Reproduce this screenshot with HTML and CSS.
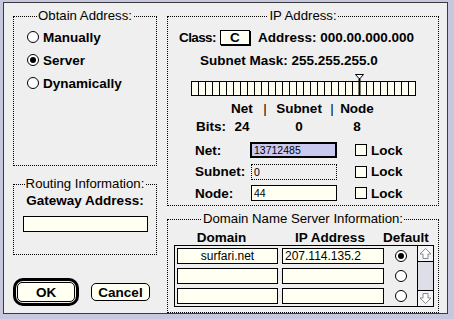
FILE: index.html
```html
<!DOCTYPE html>
<html lang="en">
<head>
    <meta charset="UTF-8">
    <title>MacTCP Configuration</title>
    <link rel="stylesheet" href="styles.css">
</head>
<body>
    <div class="dialog">
        <!-- Left column -->
        <div class="col-left">
            <fieldset class="group obtain">
                <legend>Obtain Address:</legend>
                <div class="radios">
                    <div class="radio-row"><span class="radio"></span>Manually</div>
                    <div class="radio-row"><span class="radio on"></span>Server</div>
                    <div class="radio-row"><span class="radio"></span>Dynamically</div>
                </div>
            </fieldset>

            <fieldset class="group routing">
                <legend>Routing Information:</legend>
                <div class="gw-label">Gateway Address:</div>
                <div class="gw-field"></div>
            </fieldset>

            <div class="buttons">
                <div class="default-ring"><button class="btn">OK</button></div>
                <button class="btn cancel">Cancel</button>
            </div>
        </div>

        <!-- Right column -->
        <div class="col-right">
            <fieldset class="group ip">
                <legend>IP Address:</legend>
                <div class="class-row">
                    <span class="class-label">Class:</span>
                    <span class="popup">C</span>
                    <span>Address: 000.00.000.000</span>
                </div>
                <div class="mask">Subnet Mask: 255.255.255.0</div>

                <div class="slider">
                    <span></span><span></span><span></span><span></span><span></span><span></span><span></span><span></span>
                    <span></span><span></span><span></span><span></span><span></span><span></span><span></span><span></span>
                    <span></span><span></span><span></span><span></span><span></span><span></span><span></span><span></span>
                    <span></span><span></span><span></span><span></span><span></span><span></span><span></span><span></span>
                    <svg class="thumb" width="9" height="22" viewBox="0 0 9 22">
                        <path d="M0.5 0.5 H8.5 L5 4.5 H4 Z" fill="#fff" stroke="#000" stroke-width="1"/>
                        <rect x="3.5" y="4.5" width="2" height="17.5" fill="#000"/>
                    </svg>
                </div>

                <div class="bits">
                    <span></span><span>Net</span><span class="sep">|</span><span>Subnet</span><span class="sep">|</span><span>Node</span>
                    <span class="bits-label">Bits:</span><span>24</span><span></span><span>0</span><span></span><span>8</span>
                </div>

                <div class="parts">
                    <div class="part-row">
                        <span class="part-label">Net:</span>
                        <div class="field active">13712485</div>
                        <span class="check"></span><span class="lock">Lock</span>
                    </div>
                    <div class="part-row">
                        <span class="part-label">Subnet:</span>
                        <div class="field dotted">0</div>
                        <span class="check"></span><span class="lock">Lock</span>
                    </div>
                    <div class="part-row">
                        <span class="part-label">Node:</span>
                        <div class="field">44</div>
                        <span class="check"></span><span class="lock">Lock</span>
                    </div>
                </div>
            </fieldset>

            <fieldset class="group dns">
                <legend>Domain Name Server Information:</legend>
                <div class="dns-head">
                    <span class="h-domain">Domain</span>
                    <span class="h-ip">IP Address</span>
                    <span class="h-default">Default</span>
                </div>
                <div class="dns-table">
                    <div class="dns-rows">
                        <div class="dns-row">
                            <div class="cell domain">surfari.net</div>
                            <div class="cell ip">207.114.135.2</div>
                            <div class="default"><span class="radio on"></span></div>
                        </div>
                        <div class="dns-row">
                            <div class="cell domain"></div>
                            <div class="cell ip"></div>
                            <div class="default"><span class="radio"></span></div>
                        </div>
                        <div class="dns-row">
                            <div class="cell domain"></div>
                            <div class="cell ip"></div>
                            <div class="default"><span class="radio"></span></div>
                        </div>
                    </div>
                    <div class="scrollbar">
                        <div class="arrow up">
                            <svg width="15" height="15" viewBox="0 0 15 15">
                                <path d="M7.5 2.5 L13 8 H10 V12.5 H5 V8 H2 Z" fill="#fff" stroke="#8a8a8a" stroke-width="1"/>
                            </svg>
                        </div>
                        <div class="arrow down">
                            <svg width="15" height="15" viewBox="0 0 15 15">
                                <path d="M7.5 12.5 L13 7 H10 V2.5 H5 V7 H2 Z" fill="#fff" stroke="#8a8a8a" stroke-width="1"/>
                            </svg>
                        </div>
                    </div>
                </div>
            </fieldset>
        </div>
    </div>
</body>
</html>
```

FILE: styles.css
```css
body {
    margin: 0;
    background: #c7c7df;
    font-family: "Liberation Sans", Arial, sans-serif;
    font-size: 13.5px;
    font-weight: bold;
    color: #000;
}
.dialog {
    box-sizing: border-box;
    width: 445px;
    height: 312px;
    margin: 2px 0 0 3px;
    border: 1px solid #3a3a3a;
    background: #efefef;
    padding: 6px 8px 0 9px;
    display: flex;
    gap: 10px;
}
.col-left {
    width: 144px;
    display: flex;
    flex-direction: column;
}
.col-right {
    width: 272px;
    display: flex;
    flex-direction: column;
}

/* group boxes */
.group {
    box-sizing: border-box;
    margin: 0;
    padding: 0;
    border: 1px dotted #000;
    min-width: 0;
}
.group legend {
    margin: 0 auto;
    padding: 0 1px;
    font-weight: normal;
    font-size: 13.2px;
    line-height: 14px;
}
.obtain { height: 157px; }
.routing { height: 78px; margin-top: 11px; }
.ip { height: 197px; }
.dns { height: 101px; margin-top: 6px; }

/* radios */
.radios {
    display: flex;
    flex-direction: column;
    gap: 7px;
    padding: 6px 0 0 13px;
}
.radio-row {
    display: flex;
    align-items: center;
    gap: 4px;
    height: 16px;
}
.radio {
    box-sizing: border-box;
    width: 12px;
    height: 12px;
    border: 1px solid #000;
    border-radius: 50%;
    background: #fff;
    display: flex;
    align-items: center;
    justify-content: center;
}
.radio.on::after {
    content: "";
    width: 6px;
    height: 6px;
    border-radius: 50%;
    background: #000;
}

/* routing */
.gw-label {
    text-align: center;
    line-height: 15px;
    margin-top: 2px;
}
.gw-field {
    box-sizing: border-box;
    width: 125px;
    height: 16px;
    margin: 8px 0 0 9px;
    border: 1px solid #000;
    background: #fffff2;
}

/* buttons */
.buttons {
    display: flex;
    align-items: center;
    gap: 12px;
    margin-top: 23px;
}
.default-ring {
    box-sizing: border-box;
    width: 66px;
    height: 28px;
    border: 3px solid #000;
    border-radius: 10px;
    padding: 1px;
}
.btn {
    box-sizing: border-box;
    width: 100%;
    height: 100%;
    padding: 0;
    font: inherit;
    color: #000;
    border: 1px solid #000;
    border-radius: 5px;
    background: #fffff2;
}
.btn.cancel {
    width: 59px;
    height: 18px;
}

/* ip address */
.class-row {
    display: flex;
    align-items: center;
    height: 16px;
    margin: 6px 0 0 11px;
}
.class-label {
    letter-spacing: -0.6px;
}
.popup {
    box-sizing: border-box;
    width: 30px;
    height: 15px;
    line-height: 13px;
    margin: 0 8px 0 4px;
    text-align: center;
    border: 1px solid #000;
    box-shadow: 1px 1px 0 #000;
    background: #fffff2;
}
.mask {
    margin: 8px 0 0 32px;
    line-height: 15px;
}
.slider {
    position: relative;
    box-sizing: border-box;
    display: flex;
    width: 225px;
    height: 15px;
    margin: 13px 0 0 23px;
    border: 1px solid #000;
    border-right: 0;
    background: #fffff2;
}
.slider span {
    width: 6px;
    border-right: 1px solid #000;
}
.thumb {
    position: absolute;
    left: 163px;
    top: -8px;
}
.bits {
    display: grid;
    grid-template-columns: 31px 40px 6px 62px 4px 46px;
    row-gap: 3px;
    margin: 5px 0 0 23px;
    line-height: 15px;
    text-align: center;
}
.bits .sep {
    font-weight: normal;
}
.bits .bits-label {
    text-align: left;
    padding-left: 5px;
}
.parts {
    display: flex;
    flex-direction: column;
    gap: 5.5px;
    margin-top: 8px;
}
.part-row {
    display: flex;
    align-items: center;
    height: 16px;
    padding-left: 27px;
}
.part-label {
    width: 55px;
}
.field {
    box-sizing: border-box;
    width: 86px;
    height: 16px;
    margin-left: 1px;
    padding-left: 2px;
    display: flex;
    align-items: center;
    border: 1px solid #000;
    background: #fffff2;
    font-weight: normal;
    font-size: 10.5px;
}
.field.active {
    width: 87px;
    margin-left: 0;
    border-width: 2px;
    background: #c9c9ef;
}
.field.dotted {
    border-style: dotted;
    background: transparent;
}
.check {
    box-sizing: border-box;
    width: 12px;
    height: 12px;
    margin-left: 18px;
    border: 1px solid #000;
    background: #fffff2;
}
.lock {
    margin-left: 4px;
}

/* dns */
.dns-head {
    display: flex;
    margin: 5px 0 0 6px;
    line-height: 14px;
}
.h-domain {
    box-sizing: border-box;
    width: 103px;
    padding-right: 8px;
    text-align: center;
}
.h-ip {
    width: 106px;
    text-align: center;
}
.h-default {
    width: 35px;
    text-align: center;
}
.dns-table {
    box-sizing: border-box;
    display: flex;
    width: 260px;
    height: 62px;
    margin-left: 6px;
    border: 1px solid #000;
}
.dns-rows {
    flex: 1;
    display: flex;
    flex-direction: column;
    gap: 4px;
    padding: 2px 0 0 2px;
}
.dns-row {
    display: flex;
    align-items: center;
    height: 16px;
}
.cell {
    box-sizing: border-box;
    height: 16px;
    line-height: 14px;
    border: 1px solid #000;
    background: #fffff2;
    font-weight: normal;
    font-size: 12px;
}
.cell.domain {
    width: 101px;
    text-align: center;
}
.cell.ip {
    width: 102px;
    margin-left: 4px;
    padding-left: 2px;
}
.default {
    width: 33px;
    display: flex;
    justify-content: center;
}
.scrollbar {
    box-sizing: border-box;
    width: 16px;
    border-left: 1px solid #000;
    background: #dedee8;
    display: flex;
    flex-direction: column;
    justify-content: space-between;
}
.arrow {
    height: 15px;
    background: #f4f4f8;
}
.arrow.up {
    border-bottom: 1px solid #000;
}
.arrow.down {
    border-top: 1px solid #000;
}
.arrow svg {
    display: block;
}
```
